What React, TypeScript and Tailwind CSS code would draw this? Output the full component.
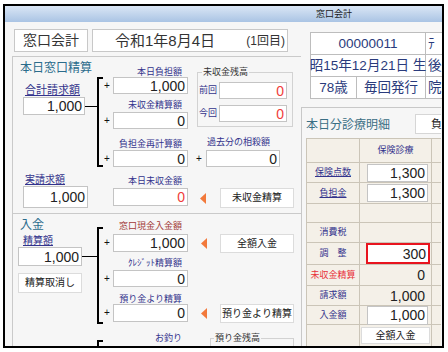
import React from 'react'

type BoxProps = { w: string; h: string; value?: string; red?: boolean; className?: string }

const Box = ({ w, h, value, red, className = '' }: BoxProps) => (
  <div
    className={`${w} ${h} flex shrink-0 items-center justify-end border border-[#c4c4c4] bg-white pr-[2px] text-[14px] leading-none ${
      red ? 'text-[#f03c3c]' : 'text-[#222]'
    } ${className}`}
  >
    {value}
  </div>
)

const Lbl = ({ children, className = '' }: { children: React.ReactNode; className?: string }) => (
  <div className={`h-[10px] whitespace-nowrap text-[9px] leading-[10px] ${className}`}>{children}</div>
)

const Plus = ({ w = 'w-[10px]' }: { w?: string }) => (
  <div className={`${w} shrink-0 pl-[1px] text-[10px] leading-none text-[#111]`}>+</div>
)

const Row = ({ value, h = 'h-[17px]', red, className = '' }: { value?: string; h?: string; red?: boolean; className?: string }) => (
  <div className={`flex items-center ${className}`}>
    <Plus />
    <Box w="w-[75px]" h={h} value={value} red={red} />
  </div>
)

const Tri = () => (
  <svg width="6" height="11" viewBox="0 0 6 11" className="shrink-0">
    <polygon points="6,0 6,11 0,5.5" fill="#f2793b" />
  </svg>
)

const Btn = ({ children, className = '' }: { children: React.ReactNode; className?: string }) => (
  <div
    className={`flex shrink-0 items-center justify-center border border-[#dcdcdc] bg-white text-[10px] leading-none text-[#222] ${className}`}
  >
    {children}
  </div>
)

const navy = 'text-[#33338c]'

const TRow = ({ h, label, labelClass = navy, children }: { h: string; label?: string; labelClass?: string; children?: React.ReactNode }) => (
  <div className={`flex ${h} border-b border-[#cbc5b8]`}>
    <div className={`flex w-[53px] shrink-0 items-center justify-center border-r border-[#cbc5b8] text-[9px] leading-none ${labelClass}`}>
      {label}
    </div>
    <div className="flex w-[72px] shrink-0 items-center border-r border-[#cbc5b8]">{children}</div>
    <div className="w-[40px] shrink-0" />
  </div>
)

export default function App() {
  return (
    <div className="h-[352px] w-[448px] bg-white pl-[3px] pt-[4px] font-['Liberation_Sans','Noto_Sans_CJK_JP',sans-serif]">
      <div className="flex h-[344px] w-[441px] flex-col overflow-hidden border-2 border-black bg-[#f6f6f6]">
        <div className="h-[16px] shrink-0 bg-linear-to-b from-[#dae6f5] to-[#aac4e4] pl-[311px] text-[9px] leading-[16px] text-[#1a1a1a]">
          窓口会計
        </div>

        <div className="flex">
          {/* left column */}
          <div className="w-[296px] shrink-0">
            <div className="ml-[9px] mt-[7px] flex h-[23px] gap-[4px]">
              <div className="flex w-[74px] items-center justify-center border border-[#c8c8c8] bg-white text-[14px] text-[#333]">
                窓口会計
              </div>
              <div className="flex w-[196px] items-center border border-[#c8c8c8] bg-white text-[#333]">
                <span className="pl-[22px] text-[15px] leading-none">令和1年8月4日</span>
                <span className="ml-auto pr-[2px] text-[12px] leading-none">(1回目)</span>
              </div>
            </div>

            <div className="ml-[7px] mt-[4px] w-[289px] border-l border-t border-[#cacaca]">
              {/* upper: 本日窓口精算 */}
              <div className="flex h-[156px]">
                <div className="w-[84px] shrink-0">
                  <div className="ml-[7px] mt-[4px] h-[14px] text-[12px] leading-[14px] text-[#2b6c8c]">本日窓口精算</div>
                  <div className={`ml-[12px] mt-[9px] h-[12px] text-[11px] leading-[12px] underline ${navy}`}>合計請求額</div>
                  <div className="ml-[10px] mt-[1px] flex items-center">
                    <Box w="w-[62px]" h="h-[18px]" value="1,000" />
                    <div className="h-px w-[12px] bg-black" />
                  </div>
                  <div className={`ml-[12px] mt-[59px] h-[12px] text-[10px] leading-[12px] underline ${navy}`}>実請求額</div>
                  <Box w="w-[65px]" h="h-[22px]" value="1,000" className="ml-[10px]" />
                </div>

                <div className="w-[91px] shrink-0">
                  <Lbl className={`mt-[10px] pr-[6px] text-right ${navy}`}>本日負担額</Lbl>
                  <div className="flex">
                    <div className="w-[6px] shrink-0 border-y-2 border-l-2 border-black" />
                    <div className="w-[85px]">
                      <Row value="1,000" />
                      <Lbl className={`mt-[6px] pr-[6px] text-right ${navy}`}>未収金精算額</Lbl>
                      <Row value="0" className="mt-[2px]" />
                      <Lbl className={`mt-[10px] pr-[6px] text-right ${navy}`}>負担金再計算額</Lbl>
                      <Row value="0" className="mt-[1px]" />
                    </div>
                  </div>
                  <Lbl className={`mt-[9px] pr-[6px] text-right ${navy}`}>本日未収金額</Lbl>
                  <Box w="w-[75px]" h="h-[18px]" value="0" red className="ml-[16px] mt-[2px]" />
                </div>

                <div className="w-[113px] shrink-0">
                  <fieldset className="ml-[9px] mt-[10px] w-[96px] border border-[#d2d2d2] px-[1px] pb-[4px]">
                    <legend className="ml-[3px] px-[1px] text-[9px] leading-[10px] text-[#333]">未収金残高</legend>
                    <div className="mt-[5px] flex items-center">
                      <span className={`w-[20px] text-[9px] leading-none ${navy}`}>前回</span>
                      <Box w="w-[68px]" h="h-[17px]" value="0" red />
                    </div>
                    <div className="mt-[6px] flex items-center">
                      <span className={`w-[20px] text-[9px] leading-none ${navy}`}>今回</span>
                      <Box w="w-[68px]" h="h-[17px]" value="0" red />
                    </div>
                  </fieldset>
                  <Lbl className={`ml-[19px] mt-[10px] ${navy}`}>過去分の相殺額</Lbl>
                  <div className="ml-[7px] mt-[3px] flex items-center">
                    <Plus w="w-[11px]" />
                    <Box w="w-[74px]" h="h-[17px]" value="0" />
                  </div>
                  <div className="ml-[12px] mt-[21px] flex items-center">
                    <Tri />
                    <Btn className="ml-[14px] h-[20px] w-[74px]">未収金精算</Btn>
                  </div>
                </div>
              </div>

              {/* lower: 入金 */}
              <div className="flex h-[134px] border-t border-[#cacaca]">
                <div className="w-[84px] shrink-0">
                  <div className="ml-[7px] mt-[4px] h-[14px] text-[12px] leading-[14px] text-[#2b6c8c]">入金</div>
                  <div className={`ml-[10px] mt-[3px] h-[12px] text-[10px] leading-[12px] underline ${navy}`}>精算額</div>
                  <div className="ml-[5px] flex items-center">
                    <Box w="w-[64px]" h="h-[19px]" value="1,000" />
                    <div className="h-px w-[15px] bg-black" />
                  </div>
                  <Btn className="ml-[5px] mt-[7px] h-[20px] w-[64px] text-[9.5px]">精算取消し</Btn>
                </div>

                <div className="w-[91px] shrink-0">
                  <div className="mt-[7px] flex">
                    <div className="mt-[6px] w-[6px] shrink-0 border-y-2 border-l-2 border-black" />
                    <div className="w-[85px] pb-[2px]">
                      <Lbl className="pr-[6px] text-right text-[#a23a36]">窓口現金入金額</Lbl>
                      <Row value="1,000" h="h-[18px]" className="mt-[3px]" />
                      <Lbl className={`mt-[6px] pr-[6px] text-right ${navy}`}>ｸﾚｼﾞｯﾄ精算額</Lbl>
                      <Row value="0" className="mt-[2px]" />
                      <Lbl className={`mt-[7px] pr-[6px] text-right ${navy}`}>預り金より精算</Lbl>
                      <Row value="0" h="h-[18px]" />
                    </div>
                  </div>
                  <div className="mt-[9px] flex">
                    <div className="mt-[7px] h-[10px] w-[6px] shrink-0 border-l-2 border-t-2 border-black" />
                    <div className="w-[85px]">
                      <Lbl className={`pr-[6px] text-right ${navy}`}>お釣り</Lbl>
                      <div className="ml-[10px] mt-[3px] h-px w-[75px] bg-[#c4c4c4]" />
                    </div>
                  </div>
                </div>

                <div className="w-[113px] shrink-0">
                  <div className="ml-[13px] mt-[20px] flex items-center">
                    <Tri />
                    <Btn className="ml-[13px] h-[19px] w-[74px]">全額入金</Btn>
                  </div>
                  <div className="ml-[13px] mt-[51px] flex items-center">
                    <Tri />
                    <Btn className="ml-[13px] h-[19px] w-[74px]">預り金より精算</Btn>
                  </div>
                  <fieldset className="ml-[22px] mt-[10px] h-[14px] w-[84px] border border-[#d2d2d2]">
                    <legend className="ml-[3px] px-[1px] text-[9px] leading-[10px] text-[#333]">預り金残高</legend>
                  </fieldset>
                </div>
              </div>
            </div>
          </div>

          {/* right column */}
          <div className="w-[140px] shrink-0">
            <div className="ml-[9px] mt-[10px] w-[136px] border-l border-t border-[#bdbdbd] bg-white text-[13.5px] leading-none text-[#2a3b7c]">
              <div className="flex h-[22px] border-b border-[#bdbdbd]">
                <div className="flex w-[115px] shrink-0 items-center justify-center border-r border-[#bdbdbd]">00000011</div>
                <div className="flex items-center pl-[2px]">ﾃ</div>
              </div>
              <div className="flex h-[22px] border-b border-[#bdbdbd]">
                <div className="flex w-[115px] shrink-0 items-center justify-center whitespace-nowrap border-r border-[#bdbdbd]">昭15年12月21日 生</div>
                <div className="flex items-center pl-[2px]">後</div>
              </div>
              <div className="flex h-[22px] border-b border-[#bdbdbd]">
                <div className="flex w-[46px] shrink-0 items-center justify-center border-r border-[#bdbdbd]">78歳</div>
                <div className="flex w-[69px] shrink-0 items-center justify-center border-r border-[#bdbdbd]">毎回発行</div>
                <div className="flex items-center pl-[2px]">院</div>
              </div>
            </div>

            <div className="mt-[8px] h-[260px] border-l border-t border-[#c8c8c8]">
              <div className="mt-[6px] flex">
                <div className="ml-[4px] mt-[4px] w-[109px] shrink-0 text-[12px] leading-[14px] text-[#3a6e84]">本日分診療明細</div>
                <div className="flex h-[20px] w-[26px] shrink-0 items-center border-y border-l border-[#d6d6d6] bg-white pl-[15px] text-[11px] leading-none text-[#222]">
                  負
                </div>
              </div>
              <div className="ml-[4px] mt-[4px] w-[135px] overflow-hidden border-l border-t border-[#cbc5b8] bg-[#f4f0e8]">
                <TRow h="h-[24px]">
                  <div className={`w-full text-center text-[9px] leading-none ${navy}`}>保険診療</div>
                </TRow>
                <TRow h="h-[20px]" label="保険点数" labelClass={`underline ${navy}`}>
                  <Box w="w-[61px]" h="h-[18px]" value="1,300" className="ml-[7px] border-[#b0b0b0]" />
                </TRow>
                <TRow h="h-[21px]" label="負担金" labelClass={`underline ${navy}`}>
                  <Box w="w-[61px]" h="h-[18px]" value="1,300" className="ml-[7px] border-[#b0b0b0]" />
                </TRow>
                <TRow h="h-[19px]" />
                <TRow h="h-[20px]" label="消費税" />
                <TRow h="h-[22px]" label="調　整">
                  <Box w="w-[64px]" h="h-[21px]" value="300" className="ml-[6px] border-2 border-[#e8141e]" />
                </TRow>
                <TRow h="h-[21px]" label="未収金精算" labelClass="text-[#e8303a]">
                  <div className="w-full pr-[6px] text-right text-[14px] leading-none text-[#222]">0</div>
                </TRow>
                <TRow h="h-[20px]" label="請求額">
                  <div className="w-full pr-[6px] text-right text-[14px] leading-none text-[#222]">1,000</div>
                </TRow>
                <TRow h="h-[19px]" label="入金額">
                  <Box w="w-[61px]" h="h-[19px]" value="1,000" className="ml-[7px] border-[#7fa9d9]" />
                </TRow>
                <TRow h="h-[22px]">
                  <Btn className="ml-[1px] h-[17px] w-[69px] bg-[#fafafa]">全額入金</Btn>
                </TRow>
              </div>
            </div>
          </div>
        </div>
      </div>
    </div>
  )
}
